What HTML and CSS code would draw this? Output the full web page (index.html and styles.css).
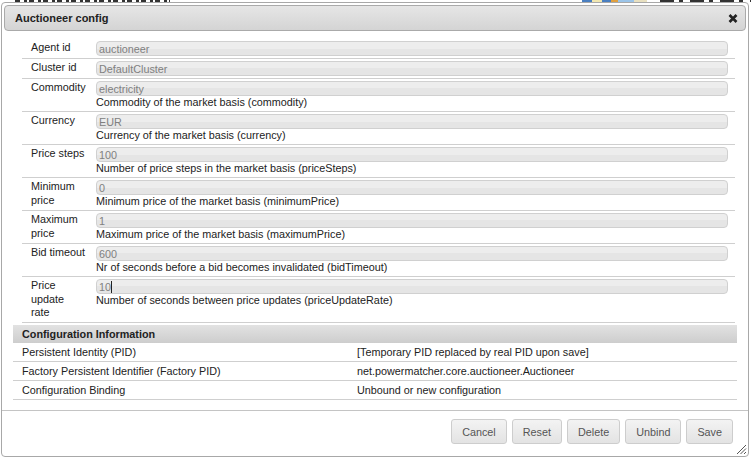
FILE: index.html
```html
<!DOCTYPE html>
<html>
<head>
<meta charset="utf-8">
<title>Auctioneer config</title>
<link rel="stylesheet" href="styles.css">
</head>
<body>
<div class="page-head">
  <div class="ph-title"></div>
  <div class="ph-right">
    <div class="ph-logo"></div>
    <div class="ph-text"></div>
  </div>
</div>

<div class="dialog">
  <div class="titlebar">
    <span class="title">Auctioneer config</span>
    <svg class="close" width="10" height="9" viewBox="0 0 10 9"><path d="M1.5 1 L8.5 8 M8.5 1 L1.5 8" stroke="#222" stroke-width="2.6" stroke-linecap="butt"/></svg>
  </div>
  <div class="content">
    <div class="form">
      <div class="frow">
        <div class="flabel">Agent id</div>
        <div class="ffield"><input class="inp" value="auctioneer"></div>
      </div>
      <div class="frow">
        <div class="flabel">Cluster id</div>
        <div class="ffield"><input class="inp" value="DefaultCluster"></div>
      </div>
      <div class="frow">
        <div class="flabel">Commodity</div>
        <div class="ffield"><input class="inp" value="electricity"><div class="desc">Commodity of the market basis (commodity)</div></div>
      </div>
      <div class="frow">
        <div class="flabel">Currency</div>
        <div class="ffield"><input class="inp" value="EUR"><div class="desc">Currency of the market basis (currency)</div></div>
      </div>
      <div class="frow">
        <div class="flabel">Price steps</div>
        <div class="ffield"><input class="inp" value="100"><div class="desc">Number of price steps in the market basis (priceSteps)</div></div>
      </div>
      <div class="frow">
        <div class="flabel">Minimum price</div>
        <div class="ffield"><input class="inp" value="0"><div class="desc">Minimum price of the market basis (minimumPrice)</div></div>
      </div>
      <div class="frow">
        <div class="flabel">Maximum price</div>
        <div class="ffield"><input class="inp" value="1"><div class="desc">Maximum price of the market basis (maximumPrice)</div></div>
      </div>
      <div class="frow">
        <div class="flabel">Bid timeout</div>
        <div class="ffield"><input class="inp" value="600"><div class="desc">Nr of seconds before a bid becomes invalidated (bidTimeout)</div></div>
      </div>
      <div class="frow">
        <div class="flabel">Price<br>update<br>rate</div>
        <div class="ffield"><div class="inp-wrap"><input class="inp" value="10"><span class="caret"></span></div><div class="desc">Number of seconds between price updates (priceUpdateRate)</div></div>
      </div>
    </div>

    <div class="info">
      <div class="info-head">Configuration Information</div>
      <div class="info-row"><span>Persistent Identity (PID)</span><span>[Temporary PID replaced by real PID upon save]</span></div>
      <div class="info-row"><span>Factory Persistent Identifier (Factory PID)</span><span>net.powermatcher.core.auctioneer.Auctioneer</span></div>
      <div class="info-row"><span>Configuration Binding</span><span>Unbound or new configuration</span></div>
    </div>
  </div>
  <div class="buttonpane">
    <button class="btn">Cancel</button>
    <button class="btn">Reset</button>
    <button class="btn">Delete</button>
    <button class="btn">Unbind</button>
    <button class="btn">Save</button>
  </div>
  <svg class="grip" width="11" height="11" viewBox="0 0 11 11"><path d="M10 1 L1 10 M10 4.5 L4.5 10 M10 8 L8 10" stroke="#555" stroke-width="1"/></svg>
</div>
</body>
</html>
```
FILE: styles.css
```css
* { box-sizing: border-box; }

body {
  margin: 0;
  background: #fff;
  font-family: "Liberation Sans", Arial, sans-serif;
  font-size: 10.8px;
  color: #222;
}

.page-head {
  height: 2px;
  overflow: hidden;
  display: flex;
  justify-content: space-between;
  padding: 0 0 0 15px;
}

.ph-title {
  width: 155px;
  height: 2px;
  background: repeating-linear-gradient(90deg, #333 0 5px, transparent 5px 9px, #333 9px 12px, transparent 12px 14px);
}

.ph-right {
  display: flex;
  gap: 13px;
}

.ph-logo {
  width: 65px;
  height: 2px;
  background: linear-gradient(90deg, #4a7fc0 0 15%, #f0e6b0 15% 30%, #4a7fc0 30% 45%, #e0a040 45% 55%, #9bc4e8 55% 80%, #e8e0c0 80%);
}

.ph-text {
  width: 91px;
  height: 2px;
  background: repeating-linear-gradient(90deg, #333 0 14px, transparent 14px 19px, #333 19px 23px, transparent 23px 30px);
}

.dialog {
  position: absolute;
  left: 1px;
  top: 2px;
  width: 748px;
  height: 455px;
  border: 1px solid #a8a8a8;
  border-radius: 4px;
  background: #fff;
  display: flex;
  flex-direction: column;
}

.titlebar {
  margin: 2px 2px 0;
  height: 26px;
  border: 1px solid #aaa;
  border-radius: 4px;
  background: linear-gradient(#e6e6e6, #d4d4d4);
  display: flex;
  align-items: center;
  justify-content: space-between;
  padding: 0 7px 0 10px;
}

.title {
  font-size: 11px;
  font-weight: bold;
  color: #222;
}

.close { display: block; }

.content {
  flex: 1;
  padding: 8px 11px 0;
}

.form {
  margin: 0 2px 0 9px;
}

.frow {
  display: grid;
  grid-template-columns: 74px 1fr;
  padding: 2px 7px 2px 0;
  border-bottom: 1px solid #cfcfcf;
}

.flabel {
  padding: 0 8px 0 9px;
  line-height: 13.5px;
  color: #222;
}

.ffield {
  display: flex;
  flex-direction: column;
}

.inp {
  display: block;
  width: 100%;
  height: 15px;
  margin: 0;
  padding: 0 2px;
  border: 1px solid #d0d0d0;
  border-radius: 4px;
  background: linear-gradient(#ededed 0 50%, #e5e5e5 50%);
  font-family: "Liberation Sans", Arial, sans-serif;
  font-size: 10.8px;
  color: #808080;
  outline: none;
}

.inp-wrap {
  position: relative;
}

.caret {
  position: absolute;
  left: 15px;
  top: 2px;
  width: 1px;
  height: 12px;
  background: #222;
}

.desc {
  line-height: 13px;
  color: #222;
}

.info {
  margin-top: 2px;
}

.info-head {
  height: 18px;
  line-height: 18px;
  padding-left: 9px;
  font-weight: bold;
  color: #222;
  background: linear-gradient(#e2e2e2, #cdcdcd);
}

.info-row {
  display: grid;
  grid-template-columns: 344px 1fr;
  height: 19px;
  line-height: 18px;
  border-bottom: 1px solid #cfcfcf;
}

.info-row span:first-child {
  padding-left: 9px;
}

.buttonpane {
  border-top: 1px solid #c4c4c4;
  height: 46px;
  padding: 8px 15px 0 0;
  display: flex;
  justify-content: flex-end;
  align-items: flex-start;
  gap: 5px;
}

.btn {
  height: 25px;
  margin: 0;
  padding: 0 10px;
  border: 1px solid #cdcdcd;
  border-radius: 3px;
  background: linear-gradient(#f3f3f3, #e3e3e3);
  font-family: "Liberation Sans", Arial, sans-serif;
  font-size: 10.8px;
  color: #555;
}

.grip {
  position: absolute;
  right: 1px;
  bottom: 1px;
}
```
